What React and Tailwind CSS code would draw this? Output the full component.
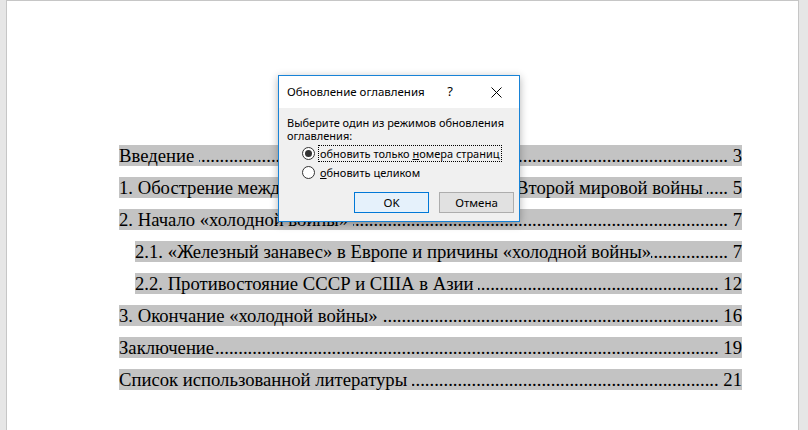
import React from "react";

const rows = [
  { label: ["Введение "], page: "3", indent: false },
  {
    // middle part lies under the dialog, squeezed into the gap the reference shows
    label: ["1. Обострение межд", "ународной обстановки накануне ", "Второй мировой войны "],
    page: "5",
    indent: false,
  },
  { label: ["2. Начало «холодной войны» "], page: "7", indent: false },
  {
    label: ["2.1. «Железный занавес» в Европе и причины «холодной войны»"],
    page: "7",
    indent: true,
  },
  { label: ["2.2. Противостояние СССР и США в Азии "], page: "12", indent: true },
  { label: ["3. Окончание «холодной войны» "], page: "16", indent: false },
  { label: ["Заключение"], page: "19", indent: false },
  { label: ["Список использованной литературы "], page: "21", indent: false },
];

const dots = ".".repeat(220);

const TocRow = ({ label, page, indent }) => (
  <div className="h-[32px]">
    <div
      className={`flex h-[21px] leading-[21px] bg-[#c3c3c3] whitespace-pre ${
        indent ? "ml-[128px] w-[607px]" : "ml-[112px] w-[623px]"
      }`}
    >
      {label.length === 3 ? (
        <>
          <span className="shrink-0">{label[0]}</span>
          <span className="shrink-0 w-[236px] overflow-hidden">{label[1]}</span>
          <span className="shrink-0">{label[2]}</span>
        </>
      ) : (
        <span className="shrink-0">{label[0]}</span>
      )}
      <span className="flex-1 min-w-0 overflow-hidden flex justify-end">
        <span className="shrink-0">{dots}</span>
      </span>
      <span className="shrink-0">{" " + page}</span>
    </div>
  </div>
);

const Radio = ({ checked }) => (
  <span className="w-[13px] h-[13px] rounded-full border border-[#333333] bg-white flex items-center justify-center shrink-0">
    {checked && <span className="w-[7px] h-[7px] rounded-full bg-[#333333]" />}
  </span>
);

const Dialog = () => (
  <div
    className="absolute left-[278px] top-[75px] w-[242px] h-[147px] border border-[#1883d7] bg-[#f0f0f0] shadow-[0_2px_8px_rgba(0,0,0,0.3)] text-[11px] text-black whitespace-nowrap"
    style={{ fontFamily: '"Noto Sans", "Open Sans", sans-serif' }}
  >
    {/* Title bar */}
    <div className="h-[32px] bg-white flex items-center text-[11.5px]">
      <span className="flex-1 pl-[8px]">Обновление оглавления</span>
      <span className="w-[46px] text-center text-[13px]">?</span>
      <span className="w-[46px] flex items-center justify-center">
        <svg width="11" height="11" viewBox="0 0 11 11">
          <path d="M0.5 0.5 L10.5 10.5 M10.5 0.5 L0.5 10.5" stroke="#000" strokeWidth="1" fill="none" />
        </svg>
      </span>
    </div>

    {/* Body */}
    <div className="pl-[8px] pt-[8px] leading-[13px]">
      <div>Выберите один из режимов обновления</div>
      <div>оглавления:</div>

      <div className="mt-[3px] ml-[15px] flex items-center h-[17px] gap-[3px]">
        <Radio checked />
        <span className="border border-dotted border-black px-[1px] h-[17px] leading-[15px]">
          обновить только <span className="underline">н</span>омера страниц
        </span>
      </div>
      <div className="mt-[2px] ml-[15px] flex items-center h-[17px] gap-[4px]">
        <Radio />
        <span className="pl-[1px]">
          <span className="underline">о</span>бновить целиком
        </span>
      </div>

      <div className="mt-[11px] pr-[5px] flex justify-end gap-[10px] text-[11.5px]">
        <button className="w-[75px] h-[21px] border border-[#0078d7] bg-[#e5f1fb] leading-[19px]">
          OK
        </button>
        <button className="w-[75px] h-[21px] border border-[#adadad] bg-[#e1e1e1] leading-[19px]">
          Отмена
        </button>
      </div>
    </div>
  </div>
);

export default function App() {
  return (
    <div className="relative w-[808px] h-[430px] overflow-hidden bg-[#e6e6e6]">
      <div
        className="ml-[6px] w-[793px] h-[440px] bg-white border-t border-l border-r border-[#c6c6c6] pt-[144px] text-[18.67px] text-black"
        style={{ fontFamily: '"Liberation Serif", "Times New Roman", serif' }}
      >
        {rows.map((r, i) => (
          <TocRow key={i} {...r} />
        ))}
      </div>
      <Dialog />
    </div>
  );
}
